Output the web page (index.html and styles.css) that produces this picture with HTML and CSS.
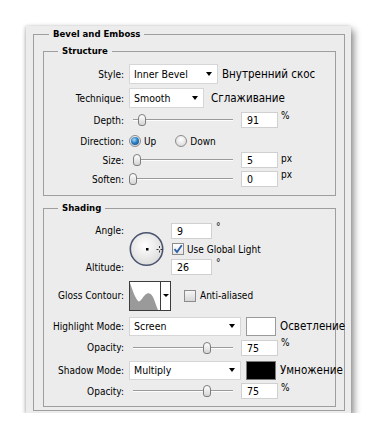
FILE: index.html
```html
<!DOCTYPE html>
<html>
<head>
<meta charset="utf-8">
<link rel="stylesheet" href="styles.css">
</head>
<body>
<div class="panel">
  <fieldset class="outer">
    <legend class="lg-outer">Bevel and Emboss</legend>

    <fieldset class="box structure">
      <legend class="lg-inner">Structure</legend>

      <div class="row h-style">
        <span class="lbl">Style:</span>
        <div class="select w-style"><span>Inner Bevel</span><i class="caret"></i></div>
        <span class="ru ru-style">Внутренний скос</span>
      </div>

      <div class="row h-tech">
        <span class="lbl">Technique:</span>
        <div class="select w-tech"><span>Smooth</span><i class="caret"></i></div>
        <span class="ru ru-tech">Сглаживание</span>
      </div>

      <div class="row h-depth">
        <span class="lbl">Depth:</span>
        <div class="slider"><div class="track"></div><div class="thumb" style="left:9px"></div></div>
        <div class="num">91</div>
        <span class="unit">%</span>
      </div>

      <div class="row h-dir">
        <span class="lbl">Direction:</span>
        <span class="radio on"></span><span class="opt">Up</span>
        <span class="radio gap-down"></span><span class="opt">Down</span>
      </div>

      <div class="row h-size">
        <span class="lbl">Size:</span>
        <div class="slider"><div class="track"></div><div class="thumb" style="left:4px"></div></div>
        <div class="num">5</div>
        <span class="unit">px</span>
      </div>

      <div class="row h-soften">
        <span class="lbl">Soften:</span>
        <div class="slider"><div class="track"></div><div class="thumb" style="left:0px"></div></div>
        <div class="num">0</div>
        <span class="unit">px</span>
      </div>
    </fieldset>

    <fieldset class="box shading">
      <legend class="lg-inner">Shading</legend>

      <div class="angle">
        <span class="lbl a-lbl">Angle:</span>
        <svg class="dial" width="36" height="36" viewBox="0 0 36 36">
          <defs>
            <radialGradient id="dg" cx="45%" cy="40%" r="60%">
              <stop offset="0" stop-color="#ffffff"/>
              <stop offset="1" stop-color="#dcdcdc"/>
            </radialGradient>
          </defs>
          <circle cx="17.5" cy="18" r="16.2" fill="url(#dg)" stroke="#4b5470" stroke-width="1.6"/>
          <rect x="17" y="17" width="2.5" height="2.5" fill="#000"/>
          <g stroke="#333" stroke-width="1">
            <line x1="30.5" y1="15" x2="30.5" y2="17"/>
            <line x1="30.5" y1="19.5" x2="30.5" y2="21.5"/>
            <line x1="27.5" y1="18.5" x2="29.5" y2="18.5"/>
            <line x1="31.5" y1="18.5" x2="33.5" y2="18.5"/>
          </g>
        </svg>
        <div class="a-in"><div class="num w-ang">9</div><span class="deg">°</span></div>
        <div class="a-chk"><span class="check on"><svg width="10" height="10" viewBox="0 0 10 10"><path d="M1.5 5.2 L4 8 L8.8 1.2" fill="none" stroke="#2a5fa8" stroke-width="1.8"/></svg></span><span class="opt">Use Global Light</span></div>
        <span class="lbl b-lbl">Altitude:</span>
        <div class="b-in"><div class="num w-ang">26</div><span class="deg">°</span></div>
      </div>

      <div class="row h-gloss">
        <span class="lbl">Gloss Contour:</span>
        <div class="contour">
          <svg width="30" height="28" viewBox="0 0 30 28">
            <rect width="30" height="28" fill="#fff"/>
            <path d="M0 28 L0 1 C2 6 4 14 8 19 C10 21 12 16 15 13 C18 10 21 11 23 15 C25 19 26 24 28 28 Z" fill="#9a9a9a"/>
          </svg>
          <div class="cbtn"><i class="caret"></i></div>
        </div>
        <span class="check aa"></span><span class="opt">Anti-aliased</span>
      </div>

      <div class="row h-hl">
        <span class="lbl">Highlight Mode:</span>
        <div class="select w-mode"><span>Screen</span><i class="caret"></i></div>
        <div class="swatch white"></div>
        <span class="ru ru-mode">Осветление</span>
      </div>

      <div class="row h-op1">
        <span class="lbl">Opacity:</span>
        <div class="slider"><div class="track"></div><div class="thumb" style="left:74px"></div></div>
        <div class="num">75</div>
        <span class="unit">%</span>
      </div>

      <div class="row h-sh">
        <span class="lbl">Shadow Mode:</span>
        <div class="select w-mode"><span>Multiply</span><i class="caret"></i></div>
        <div class="swatch black"></div>
        <span class="ru ru-mode">Умножение</span>
      </div>

      <div class="row h-op2">
        <span class="lbl">Opacity:</span>
        <div class="slider"><div class="track"></div><div class="thumb" style="left:74px"></div></div>
        <div class="num">75</div>
        <span class="unit">%</span>
      </div>
    </fieldset>
  </fieldset>
</div>
</body>
</html>
```

FILE: styles.css
```css
html, body {
  margin: 0;
  padding: 0;
  background: #ffffff;
}
body {
  font-family: "DejaVu Sans Condensed", "DejaVu Sans", sans-serif;
  font-stretch: condensed;
  font-size: 10px;
  color: #000;
}
.panel {
  margin: 26px 0 0 26px;
  width: 325px;
  height: 387px;
  background: #ececec;
  box-shadow: 3px 4px 7px rgba(0,0,0,0.45), -1px 0 3px rgba(0,0,0,0.18);
  overflow: hidden;
  box-sizing: border-box;
}
fieldset {
  border: 1px solid #9e9e9e;
  min-width: 0;
}
legend {
  font-weight: bold;
  font-size: 9.5px;
  line-height: 14px;
  height: 14px;
  padding: 0 4px;
}
.outer {
  margin: 1px 6px 0 7px;
  padding: 0 8px 4px 9px;
  height: 384px;
  box-sizing: border-box;
}
.lg-outer { margin-left: 6px; }
.box {
  margin: 3px 0 0 0;
  padding: 4px 0 5px 0;
}
.lg-inner { margin-left: 14px; }
.shading {
  margin-top: 5px;
  padding: 6px 0 6px 0;
}
.row {
  display: flex;
  align-items: center;
}
.lbl {
  flex: none;
  width: 80px;
  margin-right: 5px;
  text-align: right;
  white-space: nowrap;
}
.h-style { height: 24px; }
.h-tech { height: 24px; }
.h-depth { height: 20px; }
.h-dir { height: 22px; }
.h-size { height: 16px; }
.h-soften { height: 22px; }

.h-gloss { height: 39px; }
.h-hl { height: 22px; }
.h-op1 { height: 21px; }
.h-sh { height: 24px; }
.h-op2 { height: 18px; }

.select {
  flex: none;
  box-sizing: border-box;
  height: 20px;
  background: #fff;
  border: 1px solid #d6d6d6;
  display: flex;
  align-items: center;
  justify-content: space-between;
  padding: 0 5px 0 4px;
  font-size: 10.5px;
}
.w-style { width: 89px; }
.w-tech { width: 75px; }
.w-mode { width: 112px; height: 19px; }
.caret {
  display: block;
  width: 0;
  height: 0;
  border-left: 3.5px solid transparent;
  border-right: 3.5px solid transparent;
  border-top: 4px solid #000;
}
.ru {
  font-size: 11.5px;
  white-space: nowrap;
}
.ru-style { margin-left: 4px; }
.ru-tech { margin-left: 7px; }
.ru-mode { margin-left: 4px; }

.slider {
  flex: none;
  position: relative;
  width: 108px;
  height: 14px;
}
.track {
  margin: 6px 4px 0 4px;
  height: 1px;
  background: #9a9a9a;
  border-bottom: 1px solid #fdfdfd;
}
.thumb {
  position: absolute;
  top: 1px;
  width: 8px;
  height: 12px;
  box-sizing: border-box;
  border: 1px solid #7d7d7d;
  border-radius: 4px 4px 3px 3px;
  background: linear-gradient(#ffffff, #d4d4d4);
}
.num {
  flex: none;
  box-sizing: border-box;
  width: 37px;
  height: 16px;
  margin-left: 4px;
  background: #fff;
  border: 1px solid #d0d0d0;
  padding-left: 5px;
  line-height: 14px;
  font-size: 10.5px;
}
.unit {
  margin-left: 3px;
  align-self: flex-start;
  margin-top: 1px;
}
.h-depth .unit, .h-op1 .unit, .h-op2 .unit { margin-top: 0; }

.radio {
  flex: none;
  box-sizing: border-box;
  width: 12px;
  height: 12px;
  border-radius: 50%;
  border: 1px solid #8c8c8c;
  background: radial-gradient(circle at 50% 35%, #ffffff, #d2d2d2);
  display: flex;
  align-items: center;
  justify-content: center;
}
.radio.on::after {
  content: "";
  width: 8px;
  height: 8px;
  border-radius: 50%;
  background: radial-gradient(circle at 40% 35%, #a8dcff 0, #2a7fc4 45%, #0c3f74 100%);
}
.opt { margin-left: 3px; white-space: nowrap; }
.gap-down { margin-left: 19px; }

.angle {
  display: grid;
  grid-template-columns: 80px 37px auto;
  grid-template-rows: 19px 18px 18px;
  column-gap: 5px;
  align-items: center;
}
.a-lbl { grid-column: 1; grid-row: 1; width: auto; margin: 0; }
.b-lbl { grid-column: 1; grid-row: 3; width: auto; margin: 0; }
.dial { grid-column: 2 / span 2; grid-row: 1 / span 3; align-self: center; }
.a-in { grid-column: 3; grid-row: 1; display: flex; align-items: center; }
.a-chk { grid-column: 3; grid-row: 2; display: flex; align-items: center; margin-left: 1px; }
.b-in { grid-column: 3; grid-row: 3; display: flex; align-items: center; }
.a-in .num, .b-in .num { margin-left: 0; }
.w-ang { width: 41px; }
.deg { margin-left: 4px; align-self: flex-start; margin-top: -2px; }

.check {
  flex: none;
  box-sizing: border-box;
  width: 12px;
  height: 12px;
  border: 1px solid #8c8c8c;
  background: linear-gradient(#f6f6f6, #d6d6d6);
  display: flex;
  align-items: center;
  justify-content: center;
}
.check.on { background: linear-gradient(#ffffff, #e6e6e6); }
.a-chk .opt { margin-left: 3px; }
.aa { margin-left: 13px; }
.aa + .opt { margin-left: 4px; }

.contour {
  flex: none;
  display: flex;
  box-sizing: border-box;
  width: 42px;
  height: 30px;
  border: 1px solid #3c3c3c;
}
.contour svg { display: block; }
.cbtn {
  flex: 1;
  border-left: 1px solid #3c3c3c;
  background: #fff;
  display: flex;
  align-items: center;
  justify-content: center;
}
.cbtn .caret {
  border-left-width: 3px;
  border-right-width: 3px;
  border-top-width: 3px;
}

.swatch {
  flex: none;
  box-sizing: border-box;
  width: 30px;
  height: 19px;
  margin-left: 5px;
  border: 1px solid #9a9a9a;
}
.swatch.white { background: #fff; }
.swatch.black { background: #000; border-color: #7a7a7a; }
```
